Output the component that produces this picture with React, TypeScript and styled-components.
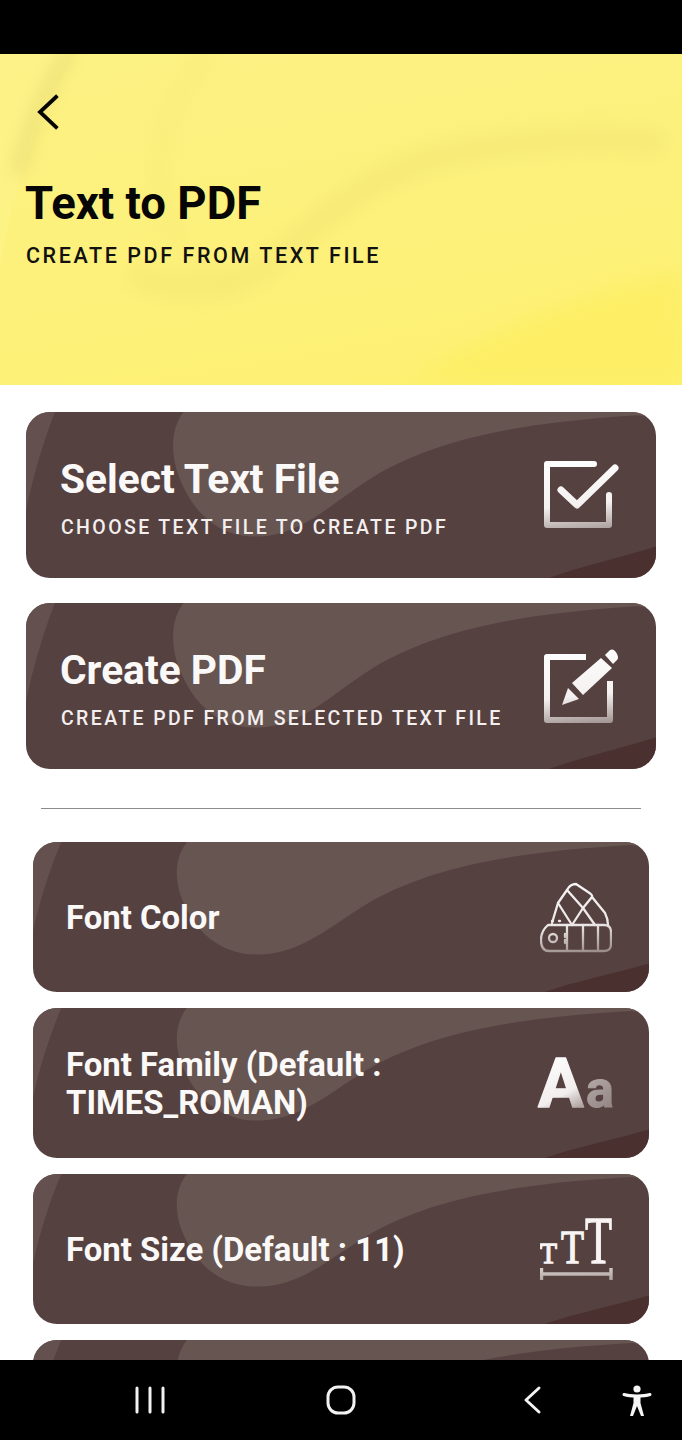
import React from 'react';
import styled, { createGlobalStyle } from 'styled-components';

const GlobalStyle = createGlobalStyle`
  html, body {
    margin: 0;
    padding: 0;
    background: #fff;
  }
  body {
    font-family: Roboto, "Liberation Sans", sans-serif;
  }
`;

const Screen = styled.div`
  width: 682px;
  height: 1440px;
  display: flex;
  flex-direction: column;
  overflow: hidden;
  background: #fff;
`;

const StatusBar = styled.div`
  height: 54px;
  flex: none;
  background: #000;
`;

const Header = styled.header`
  position: relative;
  height: 331px;
  flex: none;
  box-sizing: border-box;
  padding: 38px 0 0 25px;
  background: linear-gradient(170deg, #fcf184 0%, #fdf17a 60%, #fdf070 100%);
  overflow: hidden;
`;

const Decoration = styled.svg`
  position: absolute;
  inset: 0;
  width: 100%;
  height: 100%;
`;

const BackButton = styled.button`
  position: relative;
  display: block;
  width: 44px;
  height: 40px;
  padding: 0;
  border: 0;
  background: none;
`;

const HeaderTitle = styled.h1`
  position: relative;
  margin: 45px 0 0;
  font-size: 45.5px;
  line-height: 54px;
  font-weight: 700;
  color: #060606;
`;

const HeaderSubtitle = styled.div`
  position: relative;
  margin: 12px 0 0 1px;
  font-size: 21.5px;
  line-height: 26px;
  font-weight: 500;
  letter-spacing: 2.58px;
  color: #111;
`;

const Content = styled.main`
  flex: 1;
  min-height: 0;
  overflow: hidden;
  display: flex;
  flex-direction: column;
  padding-top: 27px;
`;

const ActionList = styled.div`
  display: flex;
  flex-direction: column;
  gap: 25px;
  padding: 0 26px;
`;

const Card = styled.div<{ $height: number }>`
  position: relative;
  height: ${(p) => p.$height}px;
  flex: none;
  display: flex;
  align-items: center;
  justify-content: space-between;
  background: #564141;
  border-radius: 24px;
  overflow: hidden;
`;

const CardText = styled.div`
  position: relative;
  padding: 5px 0 0 34px;
`;

const CardTitle = styled.div`
  font-size: 40.7px;
  line-height: 46px;
  font-weight: 700;
  color: #fbf9f8;
`;

const CardSubtitle = styled.div`
  margin: 14px 0 0 1px;
  font-size: 19.5px;
  line-height: 24px;
  font-weight: 500;
  letter-spacing: 2.38px;
  color: #f3efee;
`;

const Divider = styled.hr`
  width: 600px;
  height: 1px;
  flex: none;
  margin: 39px 0 33px 41px;
  border: 0;
  background: #8b8b8b;
`;

const OptionList = styled.div`
  display: flex;
  flex-direction: column;
  gap: 16px;
  padding: 0 33px;
`;

const OptionLabel = styled.div`
  position: relative;
  width: 400px;
  padding: 2px 0 0 33px;
  font-size: 32.9px;
  line-height: 38px;
  font-weight: 700;
  color: #fbf9f8;
`;

const IconSvg = styled.svg<{ $right: number }>`
  position: relative;
  flex: none;
  margin-right: ${(p) => p.$right}px;
`;

const NavBar = styled.nav`
  position: relative;
  height: 80px;
  flex: none;
  box-sizing: border-box;
  padding: 0 54.5px;
  display: grid;
  grid-template-columns: repeat(3, 191px);
  align-items: center;
  justify-items: center;
  background: #000;
`;

const AccessibilityIcon = styled.svg`
  position: absolute;
  left: 620px;
  top: 24px;
`;

const CardWaves: React.FC = () => (
  <Decoration viewBox="0 0 100 100" preserveAspectRatio="none" aria-hidden="true">
    <path d="M0 0 H4.6 C3 15 1 40 0 60 Z" fill="#64514f" />
    <path
      d="M25 0 C23 10 23 24 24 36 C26 58 30 76 37 75 C45 74 50 48 58 33 C66 18 76 7 97 2 L100 3 V0 Z"
      fill="#675552"
    />
    <path d="M83 100 C88 93 94 88 100 81 V100 Z" fill="#4b3030" />
  </Decoration>
);

const HeaderWaves: React.FC = () => (
  <Decoration viewBox="0 0 682 331" preserveAspectRatio="none" aria-hidden="true">
    <defs>
      <filter id="soft" x="-20%" y="-20%" width="140%" height="140%">
        <feGaussianBlur stdDeviation="10" />
      </filter>
      <filter id="softEdge" x="-30%" y="-20%" width="160%" height="140%">
        <feGaussianBlur stdDeviation="8" />
      </filter>
    </defs>
    <path d="M0 0 H70 C40 50 14 130 0 216 Z" fill="#fdf389" opacity="0.6" />
    <path
      d="M70 -5 C48 30 30 70 18 120"
      fill="none"
      stroke="#dccf6c"
      strokeWidth="12"
      opacity="0.5"
      filter="url(#softEdge)"
    />
    <path
      d="M130 220 C180 240 225 240 268 212 C320 165 375 115 460 98 C530 85 610 82 665 90"
      fill="none"
      stroke="#e9da6c"
      strokeWidth="22"
      opacity="0.34"
      filter="url(#soft)"
    />
    <path
      d="M212 0 C170 40 155 90 160 130 C165 180 185 220 240 228"
      fill="none"
      stroke="#f3e474"
      strokeWidth="12"
      opacity="0.4"
      filter="url(#soft)"
    />
    <path d="M410 331 C480 280 580 240 682 218 V331 Z" fill="#fdee62" opacity="0.8" filter="url(#soft)" />
  </Decoration>
);

const IconGradient: React.FC<{ id: string; size: number }> = ({ id, size }) => (
  <defs>
    <linearGradient id={id} gradientUnits="userSpaceOnUse" x1={size * 0.45} y1="0" x2={size * 0.55} y2={size}>
      <stop offset="0" stopColor="#ffffff" />
      <stop offset="0.62" stopColor="#f4f1f0" />
      <stop offset="1" stopColor="#a09391" />
    </linearGradient>
  </defs>
);

const CheckIcon: React.FC = () => (
  <IconSvg $right={36} width="80" height="80" viewBox="0 0 80 80" fill="none" aria-hidden="true">
    <IconGradient id="gradCheck" size={80} />
    <path d="M54 9 H7 V70 H69 V40" stroke="url(#gradCheck)" strokeWidth="6" strokeLinecap="round" strokeLinejoin="round" />
    <path d="M21 35 L37 50 L75 13" stroke="url(#gradCheck)" strokeWidth="7" strokeLinecap="round" strokeLinejoin="round" />
  </IconSvg>
);

const EditIcon: React.FC = () => (
  <IconSvg $right={36} width="80" height="80" viewBox="0 0 80 80" fill="none" aria-hidden="true">
    <IconGradient id="gradEdit" size={80} />
    <path d="M46 11 H7 V74 H70 V35" stroke="url(#gradEdit)" strokeWidth="6" strokeLinejoin="round" />
    <path d="M22 59 L28 42 L39 53 Z" fill="url(#gradEdit)" />
    <path d="M32 37 L61 12 L72 22 L43 49 Z" fill="url(#gradEdit)" />
    <path d="M65 9 L70 4 Q74 2 77 8 Q79 12 77 14 L73 18 Z" fill="url(#gradEdit)" />
  </IconSvg>
);

const SwatchIcon: React.FC = () => (
  <IconSvg $right={37} width="72" height="72" viewBox="0 0 72 72" fill="none" aria-hidden="true">
    <IconGradient id="gradSwatch" size={72} />
    <g stroke="url(#gradSwatch)" strokeWidth="2.3" strokeLinejoin="round" strokeLinecap="round" opacity="0.95">
      <path d="M8 44 H64 Q71 44 71 51 V63 Q71 70 64 70 H9 Q1 70 1 59 Q1 50 8 44 Z" />
      <path d="M27 44 V70 M43 44 V70 M58 44 V70" />
      <circle cx="13" cy="57" r="4" />
      <path d="M25 53 V56 M25 59 V62" />
      <path d="M27 9 Q30 3 36 3 L48 11 Q53 14 52 16 L43 27 Z" />
      <path d="M52 16 L65 32 Q68 38 68 44 M43 27 L55 44" />
      <path d="M18 22 L27 9 M18 22 L32 44 M32 44 L43 27" />
      <path d="M12 42 L18 22" />
      <path d="M12 40 H13 M19 40 H20" />
    </g>
  </IconSvg>
);

const FamilyIcon: React.FC = () => (
  <IconSvg $right={33} width="80" height="100" viewBox="0 0 80 100" aria-hidden="true">
    <defs>
      <linearGradient id="gradFamily" gradientUnits="userSpaceOnUse" x1="10" y1="20" x2="40" y2="76">
        <stop offset="0" stopColor="#ffffff" />
        <stop offset="0.7" stopColor="#f1eeed" />
        <stop offset="1" stopColor="#b0a3a1" />
      </linearGradient>
      <linearGradient id="gradFamilySmall" gradientUnits="userSpaceOnUse" x1="50" y1="40" x2="80" y2="76">
        <stop offset="0" stopColor="#b8aeac" />
        <stop offset="1" stopColor="#8f8280" />
      </linearGradient>
    </defs>
    <text
      x="2"
      y="74"
      fontFamily="Roboto, sans-serif"
      fontWeight="700"
      fontSize="68"
      fill="url(#gradFamily)"
      stroke="url(#gradFamily)"
      strokeWidth="1.5"
      strokeLinejoin="round"
    >
      A
    </text>
    <text
      x="50"
      y="74"
      fontFamily="Roboto, sans-serif"
      fontWeight="700"
      fontSize="52"
      fill="url(#gradFamilySmall)"
      stroke="url(#gradFamilySmall)"
      strokeWidth="1"
      strokeLinejoin="round"
    >
      a
    </text>
  </IconSvg>
);

const SizeIcon: React.FC = () => (
  <IconSvg $right={33} width="76" height="100" viewBox="0 0 76 100" fill="none" aria-hidden="true">
    <defs>
      <linearGradient id="gradSize" gradientUnits="userSpaceOnUse" x1="36" y1="14" x2="38" y2="84">
        <stop offset="0" stopColor="#ffffff" />
        <stop offset="0.62" stopColor="#f4f1f0" />
        <stop offset="1" stopColor="#a89b99" />
      </linearGradient>
    </defs>
    <g fontFamily="'Liberation Serif', serif" fill="#f7f4f3" stroke="#f7f4f3" strokeWidth="1.3">
      <text transform="translate(0 64) scale(0.93 1)" fontSize="30">T</text>
      <text transform="translate(21 64) scale(0.8 1)" fontSize="47">T</text>
      <text transform="translate(45 64) scale(0.65 1)" fontSize="68">T</text>
    </g>
    <path d="M1.5 69 V81 M1.5 75 H71 M71 69 V81" stroke="url(#gradSize)" strokeWidth="3.4" />
  </IconSvg>
);

const App: React.FC = () => (
  <>
    <GlobalStyle />
    <Screen>
      <StatusBar />
      <Header>
        <HeaderWaves />
        <BackButton aria-label="Back">
          <svg width="44" height="40" viewBox="0 0 44 40" fill="none">
            <path d="M31 5 L15 20 L31 35" stroke="#050505" strokeWidth="3.8" strokeLinecap="square" />
          </svg>
        </BackButton>
        <HeaderTitle>Text to PDF</HeaderTitle>
        <HeaderSubtitle>CREATE PDF FROM TEXT FILE</HeaderSubtitle>
      </Header>
      <Content>
        <ActionList>
          <Card $height={166}>
            <CardWaves />
            <CardText>
              <CardTitle>Select Text File</CardTitle>
              <CardSubtitle>CHOOSE TEXT FILE TO CREATE PDF</CardSubtitle>
            </CardText>
            <CheckIcon />
          </Card>
          <Card $height={166}>
            <CardWaves />
            <CardText>
              <CardTitle>Create PDF</CardTitle>
              <CardSubtitle>CREATE PDF FROM SELECTED TEXT FILE</CardSubtitle>
            </CardText>
            <EditIcon />
          </Card>
        </ActionList>
        <Divider />
        <OptionList>
          <Card $height={150}>
            <CardWaves />
            <OptionLabel>Font Color</OptionLabel>
            <SwatchIcon />
          </Card>
          <Card $height={150}>
            <CardWaves />
            <OptionLabel>Font Family (Default : TIMES_ROMAN)</OptionLabel>
            <FamilyIcon />
          </Card>
          <Card $height={150}>
            <CardWaves />
            <OptionLabel>Font Size (Default : 11)</OptionLabel>
            <SizeIcon />
          </Card>
          <Card $height={150}>
            <CardWaves />
          </Card>
        </OptionList>
      </Content>
      <NavBar>
        <svg width="30" height="30" viewBox="0 0 30 30" fill="none" stroke="#f2f2f2" strokeWidth="3" strokeLinecap="round">
          <path d="M2 3 V27 M15 3 V27 M28 3 V27" />
        </svg>
        <svg width="30" height="30" viewBox="0 0 30 30" fill="none" stroke="#f2f2f2" strokeWidth="3">
          <rect x="2" y="2" width="26" height="26" rx="10" />
        </svg>
        <svg width="20" height="30" viewBox="0 0 20 30" fill="none" stroke="#f2f2f2" strokeWidth="3" strokeLinecap="round" strokeLinejoin="round">
          <path d="M17 3 L4 15 L17 27" />
        </svg>
        <AccessibilityIcon width="34" height="34" viewBox="0 0 34 34" aria-label="Accessibility">
          <circle cx="17" cy="5" r="3.6" fill="#f5f5f5" />
          <path
            d="M4 10.5 C10 12.5 24 12.5 30 10.5"
            fill="none"
            stroke="#f5f5f5"
            strokeWidth="3"
            strokeLinecap="round"
          />
          <path d="M13.5 12 H20.5 V19 L24 32 H21 L17 22 L13 32 H10 L13.5 19 Z" fill="#f5f5f5" />
        </AccessibilityIcon>
      </NavBar>
    </Screen>
  </>
);

export default App;
